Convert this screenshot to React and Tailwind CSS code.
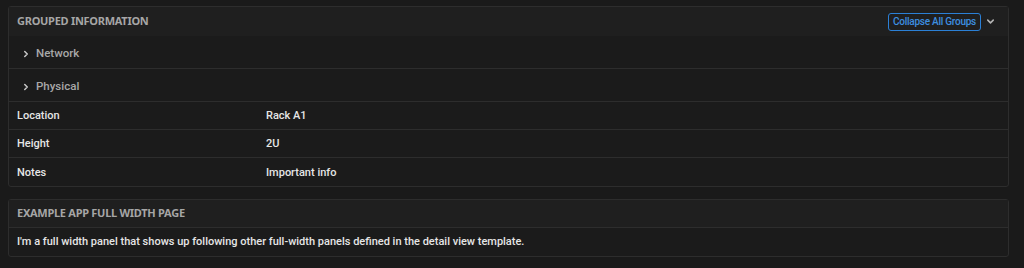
import React from "react";

const Chevron = ({ className }) => (
  <svg viewBox="0 0 16 16" className={className} fill="none" stroke="currentColor" strokeWidth="2.4" strokeLinecap="round" strokeLinejoin="round">
    <path d="M6 4l4 4-4 4" />
  </svg>
);

const ChevronDown = ({ className }) => (
  <svg viewBox="0 0 16 16" className={className} fill="none" stroke="currentColor" strokeWidth="2.2" strokeLinecap="round" strokeLinejoin="round">
    <path d="M4 6l4 4 4-4" />
  </svg>
);

const sans = { fontFamily: 'Roboto, "Noto Sans", sans-serif' };
const hdr = { fontFamily: '"Noto Sans", Roboto, sans-serif' };

export default function App() {
  return (
    <div
      className="min-h-[268px] w-[1024px] bg-[#1a1a1a] pl-2 pr-[15px] pt-[6px] pb-3 text-[11px]"
      style={sans}
    >
      <div className="rounded-[3px] border border-[#2d2d2d] bg-[#1b1b1b]">
        <div className="flex h-[29px] items-center justify-between bg-[#1f1f1f] pl-2 pr-[12px]">
          <span style={hdr} className="text-[11px] font-bold uppercase tracking-tight text-[#a6a6a6]">Grouped Information</span>
          <div className="flex items-center gap-[4px]">
            <button className="h-[18px] rounded-[3px] border border-[#2b80d6] px-[4px] text-[10px] font-medium leading-none tracking-[-0.25px] text-[#3d8fe0]">
              Collapse All Groups
            </button>
            <ChevronDown className="h-[11px] w-[11px] text-[#b5b5b5]" />
          </div>
        </div>
        <div className="flex h-[33px] items-center gap-[5px] border-b border-[#2d2d2d] pl-[12px] pt-[3px] text-[11.5px] font-medium text-[#a8a8a8]">
          <Chevron className="h-[10px] w-[10px] text-[#c8c8c8]" />
          <span>Network</span>
        </div>
        <div className="flex h-[33px] items-center gap-[5px] border-b border-[#2d2d2d] pl-[12px] pt-[3px] text-[11.5px] font-medium text-[#a8a8a8]">
          <Chevron className="h-[10px] w-[10px] text-[#c8c8c8]" />
          <span>Physical</span>
        </div>
        {[
          ["Location", "Rack A1"],
          ["Height", "2U"],
          ["Notes", "Important info"],
        ].map(([k, v], i) => (
          <div
            key={k}
            className={`grid h-[28px] grid-cols-[249px_1fr] items-center pl-2 pt-[2px] font-medium text-[#e6e6e6] ${i < 2 ? "border-b border-[#2d2d2d]" : ""}`}
          >
            <span>{k}</span>
            <span>{v}</span>
          </div>
        ))}
      </div>

      <div className="mt-[12px] rounded-[3px] border border-[#2d2d2d] bg-[#1b1b1b]">
        <div className="flex h-[28px] items-center border-b border-[#2d2d2d] bg-[#1f1f1f] pl-2">
          <span style={hdr} className="text-[11px] font-bold uppercase tracking-tight text-[#a6a6a6]">Example App Full Width Page</span>
        </div>
        <div className="flex h-[28px] items-center pl-2 pt-[1px] font-medium text-[#e6e6e6]">
          I'm a full width panel that shows up following other full-width panels defined in the detail view template.
        </div>
      </div>
    </div>
  );
}
